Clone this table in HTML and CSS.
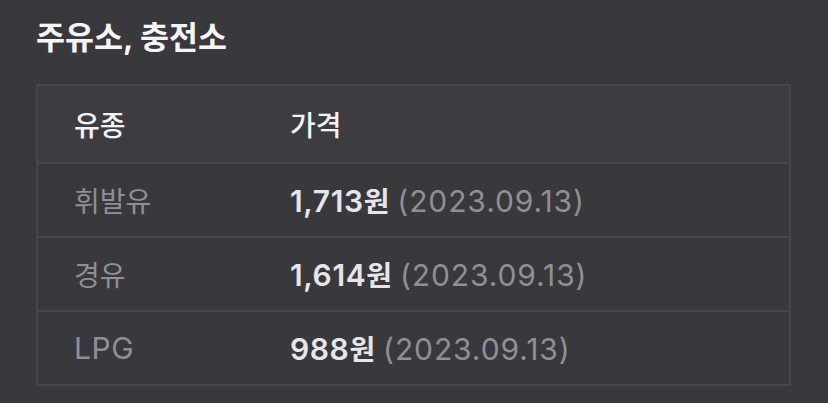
FILE: index.html
```html
<!DOCTYPE html>
<html lang="ko">
<head>
    <meta charset="UTF-8">
    <meta name="viewport" content="width=device-width, initial-scale=1.0">
    <title>주유소, 충전소</title>
    <link rel="stylesheet" href="styles.css">
</head>
<body>
    <div class="container">
        <h2 class="title">주유소, 충전소</h2>

        <table class="price-table">
            <thead>
                <tr>
                    <th class="col-type">유종</th>
                    <th>가격</th>
                </tr>
            </thead>
            <tbody>
                <tr>
                    <td class="col-type">휘발유</td>
                    <td><span class="price"><span class="num">1,713</span>원</span> <span class="date">(2023.09.13)</span></td>
                </tr>
                <tr>
                    <td class="col-type">경유</td>
                    <td><span class="price"><span class="num">1,614</span>원</span> <span class="date">(2023.09.13)</span></td>
                </tr>
                <tr>
                    <td class="col-type"><span class="num">LPG</span></td>
                    <td><span class="price"><span class="num">988</span>원</span> <span class="date">(2023.09.13)</span></td>
                </tr>
            </tbody>
        </table>
    </div>
</body>
</html>
```

FILE: styles.css
```css
body {
    margin: 0;
    padding: 0;
    background-color: #39383d;
    color: #f2f2f7;
    font-family: Inter, 'Noto Sans CJK KR', sans-serif;
}

.container {
    padding: 16px 37px 0 36px;
}

.title {
    margin: 0 0 24px;
    font-size: 31.5px;
    font-weight: 700;
    line-height: 44px;
    color: #f5f5f7;
}

.price-table {
    width: 100%;
    border-collapse: collapse;
    border: 2px solid #47464b;
}

.price-table th,
.price-table td {
    padding: 0;
    text-align: left;
    font-size: 28px;
    border-bottom: 2px solid #47464b;
}

.price-table th {
    height: 76px;
    background-color: #3d3c41;
    font-weight: 500;
    color: #f2f2f7;
}

.price-table td {
    height: 72px;
}

.price-table .col-type {
    width: 253px;
    padding-left: 36px;
    box-sizing: border-box;
}

td.col-type {
    color: #8f8f94;
    font-weight: 400;
}

.num,
.date {
    font-size: 30px;
    letter-spacing: 0.6px;
}

.date {
    letter-spacing: 0.9px;
}

.price {
    font-weight: 600;
    color: #e5e5ea;
}

.date {
    color: #8f8f94;
    font-weight: 400;
}
```
